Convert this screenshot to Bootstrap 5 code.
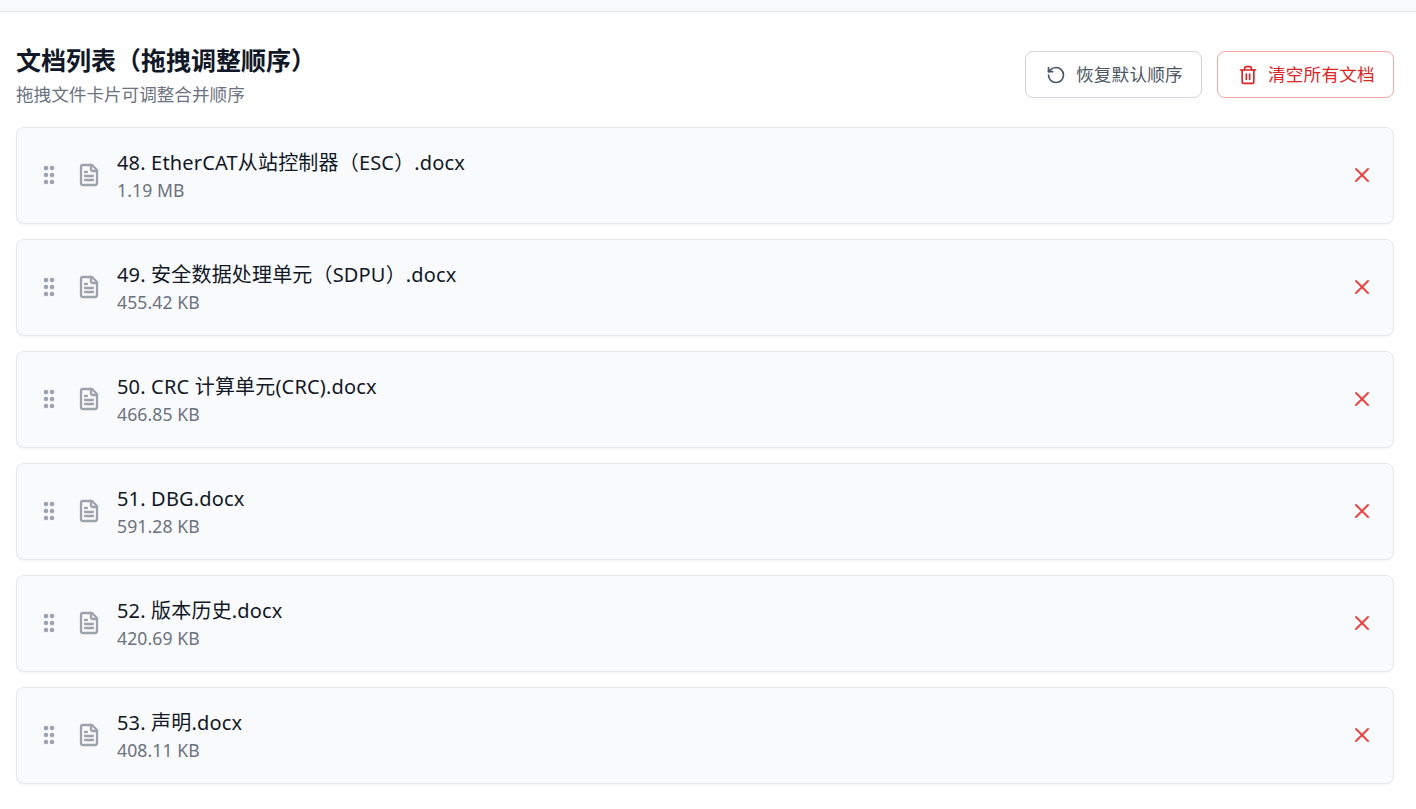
<!DOCTYPE html>
<html lang="zh-CN">
<head>
<meta charset="utf-8">
<title>文档列表</title>
<link rel="stylesheet" href="https://cdn.jsdelivr.net/npm/bootstrap@5.3.0/dist/css/bootstrap.min.css">
<style>
html,body{height:809px;overflow:hidden}
body{background:#fff;font-family:"Noto Sans","Noto Sans CJK SC",sans-serif;color:#111827}
.topstrip{height:12px;background:#f9fafb;border-bottom:1px solid #e5e7eb}
.pagewrap{padding:33px 22px 0 16px}
.headrow{height:82px}
.pagetitle{font-size:25px;line-height:30px;font-weight:700;color:#111827;margin:0}
.pagesub{font-size:17.6px;line-height:24px;color:#6b7280;margin:7px 0 0}
.btngroup{gap:15px;margin-top:1px}
.actbtn{width:177px;height:47px;font-size:17.6px;line-height:24px;letter-spacing:.2px;border-radius:8px;background:#fff;padding:0 0 0 20px;gap:10px;margin-top:5px;white-space:nowrap}
.btnlabel{margin-bottom:2px}
.btn-reset{border:1px solid #d1d5db;color:#4b5563}
.btn-clear{border:1px solid #fca5a5;color:#dc2626}
.filelist{gap:16px}
.fileitem{height:97px;margin-bottom:-1px;background:#f9fafb;border:1px solid #e5e7eb;border-radius:8px;box-shadow:0 1px 2px rgba(0,0,0,.05);padding:0 19px 2px 20px}
.gripicon{width:24px;height:24px;color:#9ca3af;flex:none}
.docicon{width:24px;height:24px;color:#9ca3af;flex:none;margin-left:16px}
.fileinfo{margin-left:16px;min-width:0;margin-top:3px}
.fname{font-size:20px;line-height:24px;letter-spacing:.17px;color:#111827}
.fsize{font-size:17.6px;line-height:24px;letter-spacing:.1px;color:#6b7280;margin-top:3px}
.delicon{width:24px;height:24px;color:#ef4444;flex:none}
</style>
</head>
<body>
<div class="topstrip"></div>
<main class="pagewrap">
  <div class="headrow d-flex justify-content-between align-items-start">
    <div>
      <h2 class="pagetitle">文档列表（拖拽调整顺序）</h2>
      <p class="pagesub">拖拽文件卡片可调整合并顺序</p>
    </div>
    <div class="btngroup d-flex">
      <button type="button" class="btn actbtn btn-reset d-flex align-items-center">
        <svg class="flex-shrink-0" width="20" height="20" viewBox="0 0 24 24" fill="none" stroke="currentColor" stroke-width="2" stroke-linecap="round" stroke-linejoin="round"><path d="M3 12a9 9 0 1 0 9-9 9.75 9.75 0 0 0-6.74 2.74L3 8"/><path d="M3 3v5h5"/></svg>
        <span class="btnlabel">恢复默认顺序</span>
      </button>
      <button type="button" class="btn actbtn btn-clear d-flex align-items-center">
        <svg class="flex-shrink-0" width="20" height="20" viewBox="0 0 24 24" fill="none" stroke="currentColor" stroke-width="2" stroke-linecap="round" stroke-linejoin="round"><path d="M3 6h18"/><path d="M19 6v14a2 2 0 0 1-2 2H7a2 2 0 0 1-2-2V6"/><path d="M8 6V4a2 2 0 0 1 2-2h4a2 2 0 0 1 2 2v2"/><path d="M10 11v6"/><path d="M14 11v6"/></svg>
        <span class="btnlabel">清空所有文档</span>
      </button>
    </div>
  </div>
  <div class="filelist d-flex flex-column">
    <div class="fileitem d-flex align-items-center">
      <svg class="gripicon" viewBox="0 0 24 24" fill="currentColor"><circle cx="9" cy="5" r="2.3"/><circle cx="15" cy="5" r="2.3"/><circle cx="9" cy="12" r="2.3"/><circle cx="15" cy="12" r="2.3"/><circle cx="9" cy="19" r="2.3"/><circle cx="15" cy="19" r="2.3"/></svg>
      <svg class="docicon" viewBox="0 0 24 24" fill="none" stroke="currentColor" stroke-width="2.3" stroke-linecap="round" stroke-linejoin="round"><path d="M15 2H6a2 2 0 0 0-2 2v16a2 2 0 0 0 2 2h12a2 2 0 0 0 2-2V7Z"/><path d="M14 2v4a2 2 0 0 0 2 2h4"/><path d="M10 9H8"/><path d="M16 13H8"/><path d="M16 17H8"/></svg>
      <div class="fileinfo flex-grow-1"><div class="fname">48. EtherCAT从站控制器（ESC）.docx</div><div class="fsize">1.19 MB</div></div>
      <svg class="delicon" viewBox="0 0 24 24" fill="none" stroke="currentColor" stroke-width="2" stroke-linecap="round" stroke-linejoin="round"><path d="M18 6 6 18"/><path d="m6 6 12 12"/></svg>
    </div>
    <div class="fileitem d-flex align-items-center">
      <svg class="gripicon" viewBox="0 0 24 24" fill="currentColor"><circle cx="9" cy="5" r="2.3"/><circle cx="15" cy="5" r="2.3"/><circle cx="9" cy="12" r="2.3"/><circle cx="15" cy="12" r="2.3"/><circle cx="9" cy="19" r="2.3"/><circle cx="15" cy="19" r="2.3"/></svg>
      <svg class="docicon" viewBox="0 0 24 24" fill="none" stroke="currentColor" stroke-width="2.3" stroke-linecap="round" stroke-linejoin="round"><path d="M15 2H6a2 2 0 0 0-2 2v16a2 2 0 0 0 2 2h12a2 2 0 0 0 2-2V7Z"/><path d="M14 2v4a2 2 0 0 0 2 2h4"/><path d="M10 9H8"/><path d="M16 13H8"/><path d="M16 17H8"/></svg>
      <div class="fileinfo flex-grow-1"><div class="fname">49. 安全数据处理单元（SDPU）.docx</div><div class="fsize">455.42 KB</div></div>
      <svg class="delicon" viewBox="0 0 24 24" fill="none" stroke="currentColor" stroke-width="2" stroke-linecap="round" stroke-linejoin="round"><path d="M18 6 6 18"/><path d="m6 6 12 12"/></svg>
    </div>
    <div class="fileitem d-flex align-items-center">
      <svg class="gripicon" viewBox="0 0 24 24" fill="currentColor"><circle cx="9" cy="5" r="2.3"/><circle cx="15" cy="5" r="2.3"/><circle cx="9" cy="12" r="2.3"/><circle cx="15" cy="12" r="2.3"/><circle cx="9" cy="19" r="2.3"/><circle cx="15" cy="19" r="2.3"/></svg>
      <svg class="docicon" viewBox="0 0 24 24" fill="none" stroke="currentColor" stroke-width="2.3" stroke-linecap="round" stroke-linejoin="round"><path d="M15 2H6a2 2 0 0 0-2 2v16a2 2 0 0 0 2 2h12a2 2 0 0 0 2-2V7Z"/><path d="M14 2v4a2 2 0 0 0 2 2h4"/><path d="M10 9H8"/><path d="M16 13H8"/><path d="M16 17H8"/></svg>
      <div class="fileinfo flex-grow-1"><div class="fname">50. CRC 计算单元(CRC).docx</div><div class="fsize">466.85 KB</div></div>
      <svg class="delicon" viewBox="0 0 24 24" fill="none" stroke="currentColor" stroke-width="2" stroke-linecap="round" stroke-linejoin="round"><path d="M18 6 6 18"/><path d="m6 6 12 12"/></svg>
    </div>
    <div class="fileitem d-flex align-items-center">
      <svg class="gripicon" viewBox="0 0 24 24" fill="currentColor"><circle cx="9" cy="5" r="2.3"/><circle cx="15" cy="5" r="2.3"/><circle cx="9" cy="12" r="2.3"/><circle cx="15" cy="12" r="2.3"/><circle cx="9" cy="19" r="2.3"/><circle cx="15" cy="19" r="2.3"/></svg>
      <svg class="docicon" viewBox="0 0 24 24" fill="none" stroke="currentColor" stroke-width="2.3" stroke-linecap="round" stroke-linejoin="round"><path d="M15 2H6a2 2 0 0 0-2 2v16a2 2 0 0 0 2 2h12a2 2 0 0 0 2-2V7Z"/><path d="M14 2v4a2 2 0 0 0 2 2h4"/><path d="M10 9H8"/><path d="M16 13H8"/><path d="M16 17H8"/></svg>
      <div class="fileinfo flex-grow-1"><div class="fname">51. DBG.docx</div><div class="fsize">591.28 KB</div></div>
      <svg class="delicon" viewBox="0 0 24 24" fill="none" stroke="currentColor" stroke-width="2" stroke-linecap="round" stroke-linejoin="round"><path d="M18 6 6 18"/><path d="m6 6 12 12"/></svg>
    </div>
    <div class="fileitem d-flex align-items-center">
      <svg class="gripicon" viewBox="0 0 24 24" fill="currentColor"><circle cx="9" cy="5" r="2.3"/><circle cx="15" cy="5" r="2.3"/><circle cx="9" cy="12" r="2.3"/><circle cx="15" cy="12" r="2.3"/><circle cx="9" cy="19" r="2.3"/><circle cx="15" cy="19" r="2.3"/></svg>
      <svg class="docicon" viewBox="0 0 24 24" fill="none" stroke="currentColor" stroke-width="2.3" stroke-linecap="round" stroke-linejoin="round"><path d="M15 2H6a2 2 0 0 0-2 2v16a2 2 0 0 0 2 2h12a2 2 0 0 0 2-2V7Z"/><path d="M14 2v4a2 2 0 0 0 2 2h4"/><path d="M10 9H8"/><path d="M16 13H8"/><path d="M16 17H8"/></svg>
      <div class="fileinfo flex-grow-1"><div class="fname">52. 版本历史.docx</div><div class="fsize">420.69 KB</div></div>
      <svg class="delicon" viewBox="0 0 24 24" fill="none" stroke="currentColor" stroke-width="2" stroke-linecap="round" stroke-linejoin="round"><path d="M18 6 6 18"/><path d="m6 6 12 12"/></svg>
    </div>
    <div class="fileitem d-flex align-items-center">
      <svg class="gripicon" viewBox="0 0 24 24" fill="currentColor"><circle cx="9" cy="5" r="2.3"/><circle cx="15" cy="5" r="2.3"/><circle cx="9" cy="12" r="2.3"/><circle cx="15" cy="12" r="2.3"/><circle cx="9" cy="19" r="2.3"/><circle cx="15" cy="19" r="2.3"/></svg>
      <svg class="docicon" viewBox="0 0 24 24" fill="none" stroke="currentColor" stroke-width="2.3" stroke-linecap="round" stroke-linejoin="round"><path d="M15 2H6a2 2 0 0 0-2 2v16a2 2 0 0 0 2 2h12a2 2 0 0 0 2-2V7Z"/><path d="M14 2v4a2 2 0 0 0 2 2h4"/><path d="M10 9H8"/><path d="M16 13H8"/><path d="M16 17H8"/></svg>
      <div class="fileinfo flex-grow-1"><div class="fname">53. 声明.docx</div><div class="fsize">408.11 KB</div></div>
      <svg class="delicon" viewBox="0 0 24 24" fill="none" stroke="currentColor" stroke-width="2" stroke-linecap="round" stroke-linejoin="round"><path d="M18 6 6 18"/><path d="m6 6 12 12"/></svg>
    </div>
  </div>
</main>
<script src="https://cdn.jsdelivr.net/npm/bootstrap@5.3.0/dist/js/bootstrap.bundle.min.js"></script>
</body>
</html>
